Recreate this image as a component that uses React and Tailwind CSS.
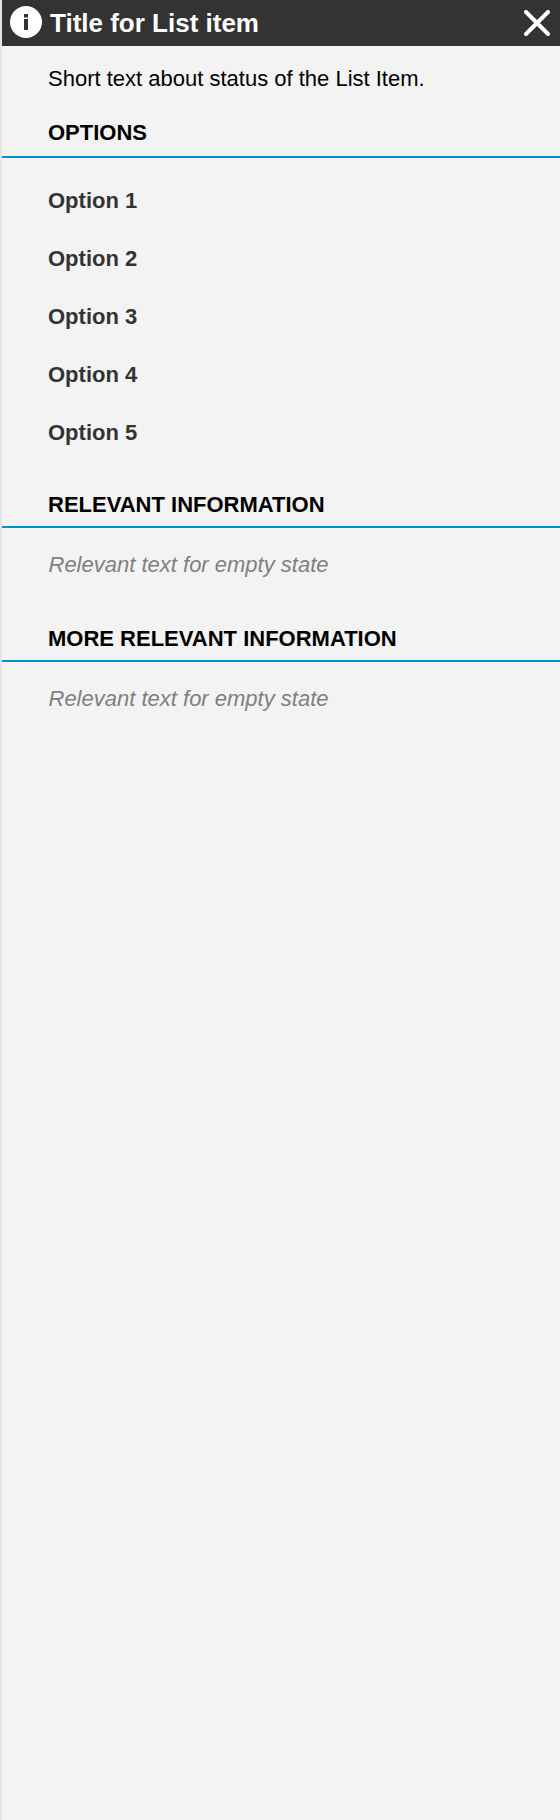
const options = ["Option 1", "Option 2", "Option 3", "Option 4", "Option 5"];

function InfoIcon() {
  return (
    <svg className="h-8 w-8 shrink-0" viewBox="0 0 32 32" aria-hidden="true">
      <circle cx="16" cy="16" r="16" fill="#fff" />
      <path d="M14 8h4v3.5h-4zM14 13h4v11h-4z" fill="#333" />
    </svg>
  );
}

function CloseIcon() {
  return (
    <svg className="h-[26px] w-[26px]" viewBox="0 0 26 26" fill="none" aria-hidden="true">
      <path d="M2 2l22 22M24 2L2 24" stroke="#fff" strokeWidth="4" strokeLinecap="round" />
    </svg>
  );
}

function SectionHeading({ className, children }) {
  return (
    <h2 className={`border-b-2 border-[#0092ce] pl-[46px] font-bold text-black ${className}`}>
      {children}
    </h2>
  );
}

function EmptyText() {
  return <p className="mt-6 pl-[46.5px] text-[#808080] italic">Relevant text for empty state</p>;
}

export default function App() {
  return (
    <div className="min-h-[1820px] w-full border-l-2 border-[#e5e5e5] bg-[#f3f3f3] font-['Liberation_Sans',Arial,sans-serif] text-[22px] leading-[26px]">
      <header className="flex h-[46px] items-center bg-[#333] pr-2.5 pb-0.5 pl-2">
        <InfoIcon />
        <h1 className="ml-2 flex-1 pt-0.5 text-[26px] leading-[30px] font-bold text-white">
          Title for List item
        </h1>
        <button type="button" aria-label="Close" className="mt-0.5">
          <CloseIcon />
        </button>
      </header>

      <p className="mt-5 pl-[46px] text-black">Short text about status of the List Item.</p>

      <SectionHeading className="mt-7 pb-2.5">OPTIONS</SectionHeading>
      <ul className="pt-3.5">
        {options.map((option) => (
          <li key={option} className="flex h-[58px] items-center pl-[46px] font-bold text-[#333]">
            {option}
          </li>
        ))}
      </ul>

      <SectionHeading className="mt-[30px] pb-2">RELEVANT INFORMATION</SectionHeading>
      <EmptyText />

      <SectionHeading className="mt-12 pb-2">MORE RELEVANT INFORMATION</SectionHeading>
      <EmptyText />
    </div>
  );
}
